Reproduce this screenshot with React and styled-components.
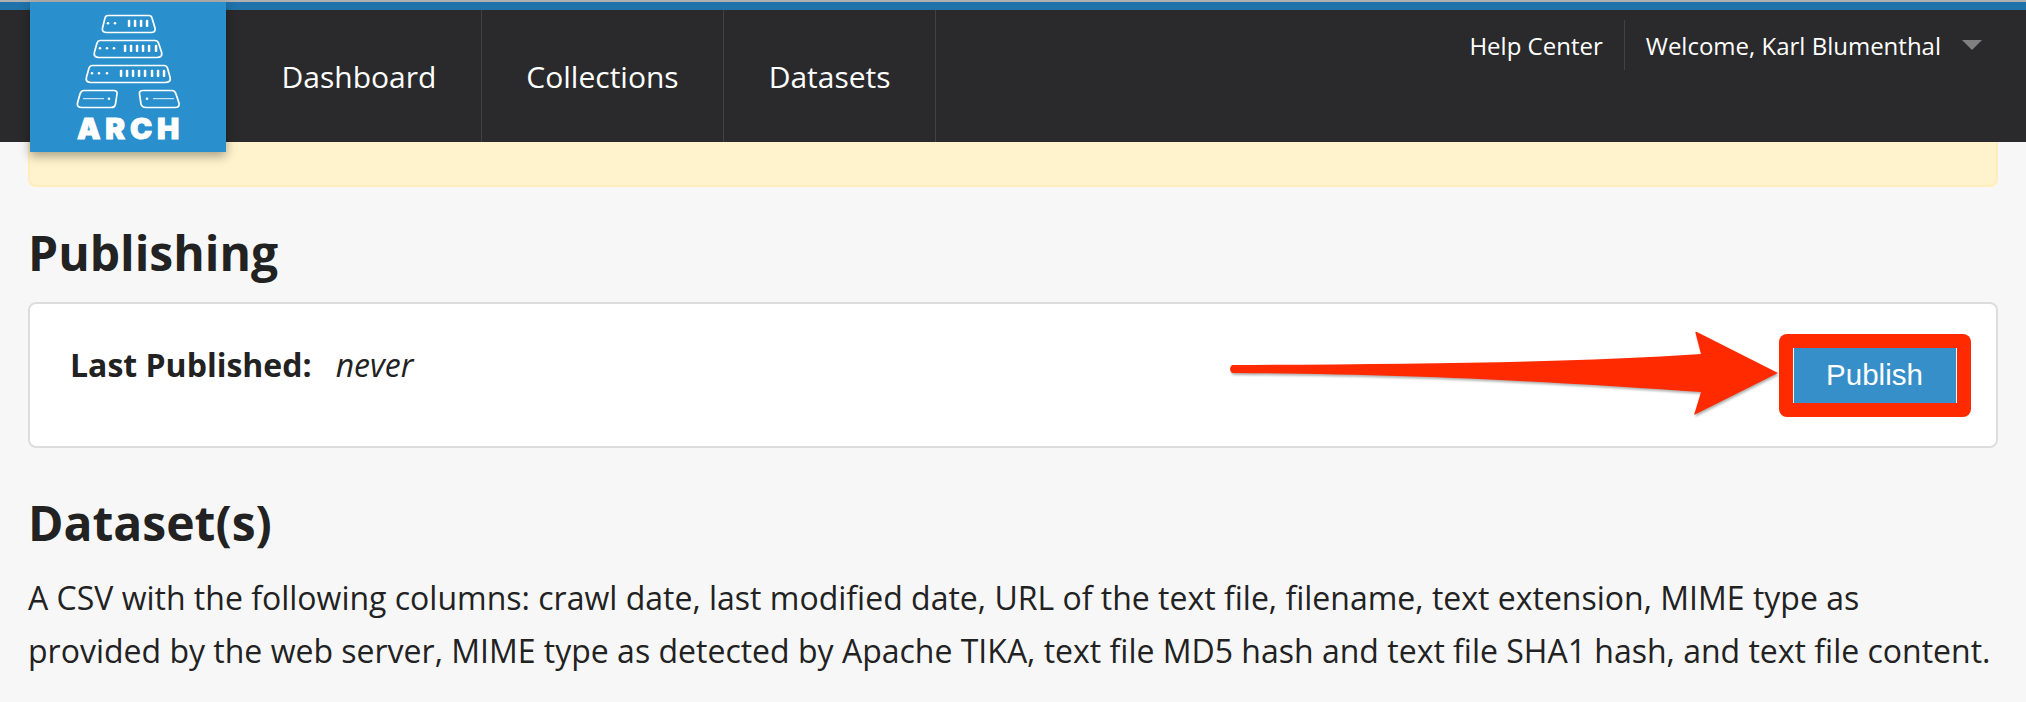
import React from 'react';
import styled, { createGlobalStyle } from 'styled-components';

const GlobalStyle = createGlobalStyle`
  html, body { margin: 0; padding: 0; background: #f7f7f7; }
  body { font-family: "Open Sans", "Liberation Sans", sans-serif; color: #222; }
`;

const red = '#ff2a00';

const servers = [
  { d: 'M78 13.5 H119 Q121.5 13.5 122 16 L125 26 Q126 30.5 121 30.5 H77 Q71.5 30.5 72.5 26 L75 16 Q75.5 13.5 78 13.5 Z', dots: [78, 85], dotY: 21.3, bars: [99, 105, 111, 117] },
  { d: 'M70 38.5 H125 Q127.5 38.5 128.5 41 L131.5 50 Q133 55.5 127 55.5 H69 Q63 55.5 64.5 50 L67 41 Q68 38.5 70 38.5 Z', dots: [70, 77, 84], dotY: 46.3, bars: [95, 101, 107, 113, 119, 126] },
  { d: 'M62 63.5 H134 Q136.5 63.5 137.5 66 L140 75 Q141.5 80.5 135 80.5 H61 Q55 80.5 56.5 75 L59 66 Q60 63.5 62 63.5 Z', dots: [62, 69, 77], dotY: 71.3, bars: [91, 97, 103, 109, 115, 122, 128, 134] },
];

const drives = [
  { d: 'M54 88.5 H84 Q87.5 88.5 87 92 L85.5 102 Q85 105.5 81 105.5 H52 Q46.5 105.5 47.5 101 L50 92 Q51 88.5 54 88.5 Z', line: [53, 74], dot: 79 },
  { d: 'M113 88.5 H142 Q145 88.5 146 92 L149 101 Q150 105.5 145 105.5 H116 Q112 105.5 111 102 L109.5 92 Q109 88.5 113 88.5 Z', line: [123, 144], dot: 117 },
];

function ArchMark() {
  return (
    <LogoSvg viewBox="0 0 196 150" fill="none">
      {servers.map((s) => (
        <g key={s.d}>
          <path d={s.d} stroke="#fff" strokeWidth="1.7" />
          {s.dots.map((x) => <circle key={x} cx={x} cy={s.dotY} r="1.3" fill="#fff" />)}
          {s.bars.map((x) => <rect key={x} x={x - 1.2} y={s.dotY - 3.6} width="2.5" height="7.4" rx="1" fill="#fff" />)}
        </g>
      ))}
      {drives.map((s) => (
        <g key={s.d}>
          <path d={s.d} stroke="#fff" strokeWidth="1.7" />
          <line x1={s.line[0]} x2={s.line[1]} y1="96.7" y2="96.7" stroke="#fff" strokeWidth="0.9" />
          <circle cx={s.dot} cy="96.7" r="1.3" fill="#fff" />
        </g>
      ))}
      <LogoWord x="47" y="137" textLength="107" lengthAdjust="spacingAndGlyphs">ARCH</LogoWord>
    </LogoSvg>
  );
}

export default function App() {
  return (
    <>
      <GlobalStyle />
      <TopLine />
      <Header>
        <Logo><ArchMark /></Logo>
        <Nav>
          <NavItem>Dashboard</NavItem>
          <NavItem>Collections</NavItem>
          <NavItem>Datasets</NavItem>
        </Nav>
        <UserMenu>
          <UserLink>Help Center</UserLink>
          <UserDivider />
          <UserLink>Welcome, Karl Blumenthal</UserLink>
          <Caret />
        </UserMenu>
      </Header>
      <Main>
        <Notice />
        <Heading>Publishing</Heading>
        <Card>
          <Status>
            <StatusLabel>Last Published:</StatusLabel>
            <StatusValue>never</StatusValue>
          </Status>
          <Actions>
            <ArrowSvg viewBox="0 1 551 86">
              <path d="M4 34 C200 33 360 31 473 23 L467 0 L550 42 L466 84 L473 61 C360 53 200 43 4 42 Q0 38 4 34 Z" fill={red} />
            </ArrowSvg>
            <Highlight>
              <PublishButton>Publish</PublishButton>
            </Highlight>
          </Actions>
        </Card>
        <Heading $second>Dataset(s)</Heading>
        <Description>
          A CSV with the following columns: crawl date, last modified date, URL of the text file, filename, text extension, MIME type as provided by the web server, MIME type as detected by Apache TIKA, text file MD5 hash and text file SHA1 hash, and text file content.
        </Description>
      </Main>
    </>
  );
}

const TopLine = styled.div`
  height: 2px;
  background: #b0b0b0;
`;
const Header = styled.header`
  display: flex;
  height: 132px;
  padding-left: 30px;
  padding-right: 44px;
  border-top: 8px solid #1f72aa;
  background: #2a2a2c;
`;
const Logo = styled.div`
  position: relative;
  z-index: 2;
  flex: none;
  width: 196px;
  height: 150px;
  margin-top: -8px;
  background: #2a90cd;
  box-shadow: 0 4px 10px rgba(0, 0, 0, 0.35);
`;
const LogoSvg = styled.svg`
  display: block;
  width: 196px;
  height: 150px;
`;
const LogoWord = styled.text`
  font-family: Inter, "Liberation Sans", sans-serif;
  font-size: 28px;
  font-weight: 900;
  letter-spacing: 4.5px;
  fill: #fff;
  stroke: #fff;
  stroke-width: 0.9px;
`;
const Nav = styled.nav`
  display: flex;
  margin-left: 11px;
`;
const NavItem = styled.a`
  display: flex;
  align-items: center;
  padding: 0 44.5px;
  border-right: 1px solid #424244;
  color: #fff;
  font-size: 30px;
`;
const UserMenu = styled.div`
  display: flex;
  align-items: center;
  align-self: flex-start;
  gap: 21px;
  height: 50px;
  margin-top: 10px;
  margin-left: auto;
`;
const UserLink = styled.a`
  color: #fff;
  font-size: 24px;
`;
const UserDivider = styled.span`
  width: 1px;
  align-self: stretch;
  background: #424244;
`;
const Caret = styled.span`
  width: 0;
  height: 0;
  border-left: 10px solid transparent;
  border-right: 10px solid transparent;
  border-top: 10px solid #808080;
`;
const Main = styled.main`
  padding: 0 28px;
`;
const Notice = styled.div`
  height: 45px;
  box-sizing: border-box;
  background: #fff3cd;
  border: 2px solid #ffeeba;
  border-top: none;
  border-radius: 0 0 8px 8px;
`;
const Heading = styled.h2`
  margin: ${(p) => (p.$second ? '42px 0 0' : '33px 0 0')};
  font-size: 48px;
  font-weight: 700;
  line-height: 66px;
  color: #222;
`;
const Card = styled.section`
  display: flex;
  align-items: center;
  justify-content: space-between;
  box-sizing: border-box;
  height: 146px;
  margin-top: 16px;
  padding: 0 25px 0 40px;
  background: #fff;
  border: 2px solid #ddd;
  border-radius: 8px;
`;
const Status = styled.div`
  display: flex;
  gap: 24px;
  margin-bottom: 22px;
  font-size: 32px;
`;
const StatusLabel = styled.strong`
  font-weight: 700;
`;
const StatusValue = styled.em`
  font-style: italic;
`;
const Actions = styled.div`
  display: flex;
  align-items: center;
`;
const ArrowSvg = styled.svg`
  display: block;
  width: 551px;
  height: 86px;
  filter: drop-shadow(1px 2px 1px rgba(0, 0, 0, 0.3));
`;
const Highlight = styled.div`
  display: flex;
  align-items: center;
  justify-content: center;
  width: 192px;
  height: 83px;
  padding-right: 1px;
  box-sizing: border-box;
  background: ${red};
  border-radius: 8px;
`;
const PublishButton = styled.button`
  width: 164px;
  height: 55px;
  padding: 0;
  background: #368fc9;
  border: none;
  border-left: 1px solid #fff;
  border-right: 1px solid #fff;
  color: #fff;
  font-family: "Liberation Sans", Arial, sans-serif;
  font-size: 29.5px;
`;
const Description = styled.p`
  margin: 15px 0 0;
  font-size: 32px;
  line-height: 53px;
  color: #222;
`;
